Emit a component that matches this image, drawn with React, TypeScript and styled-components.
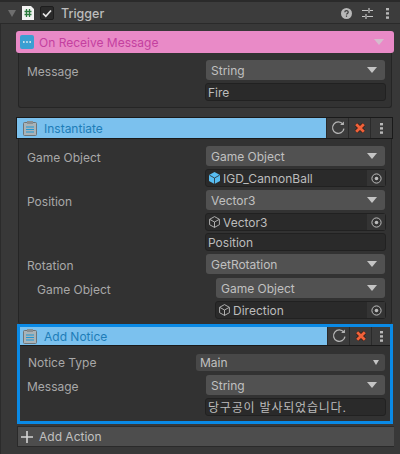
import React from 'react';
import styled, { createGlobalStyle } from 'styled-components';

const Global = createGlobalStyle`
    html, body {
        margin: 0;
        background: #383838;
        overflow: hidden;
    }
    * {
        box-sizing: border-box;
    }
`;

const Inspector = styled.div`
    width: 400px;
    height: 454px;
    padding-left: 1px;
    border-left: 1px solid #2b2b2b;
    font-family: Inter, 'Noto Sans CJK KR', sans-serif;
    font-size: 12px;
    color: #bcbcbc;
`;

const TitleBar = styled.div`
    height: 24px;
    margin: 0 0 0 -2px;
    padding: 1px 11px 0 8px;
    border-top: 2px solid #2a2a2a;
    border-bottom: 1px solid #2a2a2a;
    background: #3c3c3c;
    display: flex;
    align-items: center;
`;

const TitleText = styled.span`
    margin-left: 7px;
    flex: 1;
    font-size: 12.5px;
    font-weight: 500;
    color: #bdbdbd;
`;

const Fold = styled.span`
    width: 0;
    height: 0;
    margin-right: 6px;
    border-left: 4.5px solid transparent;
    border-right: 4.5px solid transparent;
    border-top: 7px solid #6e6e6e;
`;

const CheckBox = styled.span`
    width: 14px;
    height: 14px;
    margin-left: 6px;
    border: 1px solid #1d1d1d;
    border-radius: 2px;
    background: #2a2a2a;
    display: flex;
    align-items: center;
    justify-content: center;
`;

const TitleTools = styled.div`
    display: flex;
    align-items: center;
    gap: 10px;
    svg:last-child {
        margin-left: 3px;
    }
`;

const Stack = styled.div`
    padding: 7px 6px 0 14px;
`;

const EventHead = styled.div`
    height: 22px;
    padding: 0 10px 0 4px;
    border-radius: 3px;
    background: #e98ac7;
    color: #c4409f;
    display: flex;
    align-items: center;
    gap: 5px;
`;

const HeadTitle = styled.span`
    flex: 1;
`;

const Body = styled.div<{ $last?: boolean }>`
    margin: 0 2px;
    padding: 7px 6px ${(p) => (p.$last ? '5px' : '6px')} 8px;
    border: 1px solid #252525;
    border-top: 0;
    border-bottom: ${(p) => (p.$last ? '0' : '1px solid #252525')};
    border-radius: 0 0 3px 3px;
    background: #323232;
    display: flex;
    flex-direction: column;
    gap: 3px;
`;

const ActionHead = styled.div<{ $bare?: boolean }>`
    height: ${(p) => (p.$bare ? '19px' : '22px')};
    margin: ${(p) => (p.$bare ? '0' : '9px 1px 0 0')};
    border: ${(p) => (p.$bare ? '0' : '1px solid #1a1a1a')};
    border-bottom: 1px solid #1a1a1a;
    background: #3c3c3c;
    display: flex;
    align-items: stretch;
`;

const ActionTitle = styled.div<{ $pad: number }>`
    flex: 1;
    padding-left: ${(p) => p.$pad}px;
    background: #7bc1ee;
    color: #1e7db8;
    display: flex;
    align-items: center;
    gap: 7px;
`;

const ActionTool = styled.div<{ $narrow?: boolean }>`
    width: ${(p) => (p.$narrow ? '19px' : '22px')};
    border-left: 1px solid #2a2a2a;
    display: flex;
    align-items: center;
    justify-content: center;
    &:first-of-type {
        border-left: 0;
    }
`;

const Row = styled.div<{ $indent?: number; $value?: number; $nudge?: boolean }>`
    display: grid;
    grid-template-columns: ${(p) => p.$value ?? 179}px 1fr;
    padding-left: ${(p) => p.$indent ?? 0}px;
    margin-top: ${(p) => (p.$nudge ? '1px' : '0')};
    align-items: start;
`;

const Label = styled.div<{ $small?: boolean }>`
    height: 17px;
    padding-top: ${(p) => (p.$small ? '0' : '2px')};
    line-height: ${(p) => (p.$small ? '17px' : '20px')};
    color: #a8a8a8;
`;

const Values = styled.div`
    display: flex;
    flex-direction: column;
    gap: 3px;
`;

const Dropdown = styled.div<{ $small?: boolean }>`
    height: ${(p) => (p.$small ? '17px' : '20px')};
    padding: ${(p) => (p.$small ? '0 6px 0 4px' : '0 8px 0 5px')};
    border-radius: 3px;
    background: ${(p) => (p.$small ? '#484848' : '#515151')};
    color: #c0c0c0;
    display: flex;
    align-items: center;
    justify-content: space-between;
`;

const Arrow = styled.span<{ $small?: boolean; $colour?: string }>`
    width: 0;
    height: 0;
    border-left: ${(p) => (p.$small ? '3.5px' : '5px')} solid transparent;
    border-right: ${(p) => (p.$small ? '3.5px' : '5px')} solid transparent;
    border-top: ${(p) => (p.$small ? '5px' : '6px')} solid ${(p) => p.$colour ?? '#c4c4c4'};
`;

const TextField = styled.div<{ $tight?: boolean; $wide?: boolean }>`
    height: 18px;
    margin: ${(p) => (p.$tight ? '-1px' : '0')} -1px 0;
    padding: 0 2px;
    border: 1px solid #212121;
    border-radius: 3px;
    background: #2a2a2a;
    color: #bcbcbc;
    line-height: 17px;
    letter-spacing: ${(p) => (p.$wide ? '0.8px' : '0')};
    white-space: nowrap;
    overflow: hidden;
`;

const ObjectField = styled.div`
    height: 18px;
    margin: 0 -1px;
    padding-left: 3px;
    border: 1px solid #212121;
    border-radius: 3px;
    background: #2a2a2a;
    color: #bcbcbc;
    display: flex;
    align-items: center;
    gap: 3px;
`;

const ObjectName = styled.span`
    flex: 1;
`;

const Picker = styled.span`
    width: 18px;
    height: 16px;
    background: #343434;
    display: flex;
    align-items: center;
    justify-content: center;
`;

const Notice = styled.div`
    margin: 0 1px 2px 1px;
    border: 3px solid #0a8ae6;
    background: #323232;
`;

const NoticeBody = styled.div`
    padding: 8px 5px 5px 7px;
    display: flex;
    flex-direction: column;
    gap: 4px;
`;

const AddAction = styled.div`
    height: 21px;
    margin: 0 0 0 1px;
    padding-left: 3px;
    border-top: 1px solid #2a2a2a;
    border-bottom: 1px solid #2a2a2a;
    border-left: 1px solid #2a2a2a;
    background: #4d4d4d;
    color: #c0c0c0;
    display: flex;
    align-items: center;
    gap: 6px;
`;

function ScriptIcon() {
    return (
        <svg width="12" height="14" viewBox="0 0 12 14">
            <path d="M0 0h9l3 3v11H0z" fill="#f2f2f2" />
            <path d="M4.5 3v8M7.5 3v8M2.5 5.5h7M2.5 8.5h7" stroke="#2b7a3d" strokeWidth="1.3" fill="none" />
        </svg>
    );
}

function Check() {
    return (
        <svg width="10" height="9" viewBox="0 0 10 9">
            <path d="M1 4.5 3.8 7.2 9 1.5" stroke="#e6e6e6" strokeWidth="1.7" fill="none" />
        </svg>
    );
}

function HelpIcon() {
    return (
        <svg width="11" height="11" viewBox="0 0 11 11">
            <circle cx="5.5" cy="5.5" r="5.5" fill="#b8b8b8" />
            <path d="M3.8 4.2c0-2 3.4-2 3.4 0 0 1.2-1.7 1.2-1.7 2.4" stroke="#3c3c3c" strokeWidth="1.2" fill="none" />
            <rect x="4.9" y="7.5" width="1.2" height="1.3" fill="#3c3c3c" />
        </svg>
    );
}

function SlidersIcon() {
    return (
        <svg width="11" height="11" viewBox="0 0 11 11">
            <path d="M0 2.5h6M8 2.5h3M0 8.5h3M5 8.5h6M7 0v5M4 6v5" stroke="#c4c4c4" strokeWidth="1.2" fill="none" />
        </svg>
    );
}

function Kebab({ colour = '#b8b8b8' }: { colour?: string }) {
    return (
        <svg width="3" height="11" viewBox="0 0 3 11">
            <rect y="0" width="3" height="2.4" fill={colour} />
            <rect y="4.2" width="3" height="2.4" fill={colour} />
            <rect y="8.4" width="3" height="2.4" fill={colour} />
        </svg>
    );
}

function EventIcon() {
    return (
        <svg width="14" height="14" viewBox="0 0 14 14">
            <rect width="14" height="14" rx="2" fill="#3b9fd2" />
            <path d="M3 7h1.6M6.2 7h1.6M9.4 7H11" stroke="#f4f4f4" strokeWidth="1.6" />
        </svg>
    );
}

function ClipboardIcon() {
    return (
        <svg width="14" height="15" viewBox="0 0 14 15">
            <rect x="0.5" y="1.5" width="13" height="13" rx="1" fill="#a9b3b8" stroke="#6f7477" />
            <rect x="4" y="0" width="6" height="3" fill="#8a8f92" />
            <path d="M3 6h8M3 8.5h8M3 11h8" stroke="#1f97d4" strokeWidth="1.2" />
        </svg>
    );
}

function ResetIcon() {
    return (
        <svg width="14" height="14" viewBox="0 0 13 13">
            <path d="M11 3A5.3 5.3 0 1 0 12 7" stroke="#b4b4b4" strokeWidth="1.2" fill="none" />
            <path d="M8.4 3.8h3.6V0.4z" fill="#b4b4b4" />
        </svg>
    );
}

function RemoveIcon() {
    return (
        <svg width="12" height="12" viewBox="0 0 11 11">
            <path d="M2 2 9 9M9 2 2 9" stroke="#3a1a12" strokeWidth="3.8" />
            <path d="M2 2 9 9M9 2 2 9" stroke="#f0623a" strokeWidth="2.6" />
        </svg>
    );
}

function CubeIcon({ solid }: { solid?: boolean }) {
    if (solid) {
        return (
            <svg width="11" height="12" viewBox="0 0 11 12">
                <path d="M5.5 0 11 3v6l-5.5 3L0 9V3z" fill="#58bdf2" />
                <path d="M0.5 3.2 5.5 6l5-2.8M5.5 6v6" stroke="#2a2a2a" strokeWidth="0.8" fill="none" />
            </svg>
        );
    }
    return (
        <svg width="11" height="12" viewBox="0 0 11 12">
            <path d="M5.5 0.6 10.4 3.3v5.4L5.5 11.4.6 8.7V3.3zM.8 3.4 5.5 6l4.7-2.6M5.5 6v5.4" stroke="#bdbdbd" strokeWidth="0.9" fill="none" />
        </svg>
    );
}

function PickerDot() {
    return (
        <svg width="11" height="11" viewBox="0 0 11 11">
            <circle cx="5.5" cy="5.5" r="4.6" stroke="#bdbdbd" strokeWidth="1" fill="none" />
            <circle cx="5.5" cy="5.5" r="1.8" fill="#bdbdbd" />
        </svg>
    );
}

function Select({ children }: { children: React.ReactNode }) {
    return (
        <Dropdown>
            {children}
            <Arrow />
        </Dropdown>
    );
}

function ObjectSlot({ name, solid }: { name: string; solid?: boolean }) {
    return (
        <ObjectField>
            <CubeIcon solid={solid} />
            <ObjectName>{name}</ObjectName>
            <Picker>
                <PickerDot />
            </Picker>
        </ObjectField>
    );
}

function ActionTools({ narrow }: { narrow?: boolean }) {
    return (
        <>
            <ActionTool>
                <ResetIcon />
            </ActionTool>
            <ActionTool>
                <RemoveIcon />
            </ActionTool>
            <ActionTool $narrow={narrow}>
                <Kebab />
            </ActionTool>
        </>
    );
}

export default function App() {
    return (
        <Inspector>
            <Global />
            <TitleBar>
                <Fold />
                <ScriptIcon />
                <CheckBox>
                    <Check />
                </CheckBox>
                <TitleText>Trigger</TitleText>
                <TitleTools>
                    <HelpIcon />
                    <SlidersIcon />
                    <Kebab />
                </TitleTools>
            </TitleBar>
            <Stack>
                <EventHead>
                    <EventIcon />
                    <HeadTitle>On Receive Message</HeadTitle>
                    <Arrow $colour="#d5bccd" />
                </EventHead>
                <Body>
                    <Row>
                        <Label>Message</Label>
                        <Values>
                            <Select>String</Select>
                            <TextField>Fire</TextField>
                        </Values>
                    </Row>
                </Body>

                <ActionHead>
                    <ActionTitle $pad={6}>
                        <ClipboardIcon />
                        Instantiate
                    </ActionTitle>
                    <ActionTools />
                </ActionHead>
                <Body $last>
                    <Row>
                        <Label>Game Object</Label>
                        <Values>
                            <Select>Game Object</Select>
                            <ObjectSlot name="IGD_CannonBall" solid />
                        </Values>
                    </Row>
                    <Row>
                        <Label>Position</Label>
                        <Values>
                            <Select>Vector3</Select>
                            <ObjectSlot name="Vector3" />
                            <TextField $tight>Position</TextField>
                        </Values>
                    </Row>
                    <Row>
                        <Label>Rotation</Label>
                        <Select>GetRotation</Select>
                    </Row>
                    <Row $indent={10} $nudge>
                        <Label>Game Object</Label>
                        <Values>
                            <Select>Game Object</Select>
                            <ObjectSlot name="Direction" />
                        </Values>
                    </Row>
                </Body>

                <Notice>
                    <ActionHead $bare>
                        <ActionTitle $pad={3}>
                            <ClipboardIcon />
                            Add Notice
                        </ActionTitle>
                        <ActionTools narrow />
                    </ActionHead>
                    <NoticeBody>
                        <Row $indent={1} $value={168}>
                            <Label $small>Notice Type</Label>
                            <Dropdown $small>
                                Main
                                <Arrow $small />
                            </Dropdown>
                        </Row>
                        <Row>
                            <Label>Message</Label>
                            <Values>
                                <Select>String</Select>
                                <TextField $wide>당구공이 발사되었습니다.</TextField>
                            </Values>
                        </Row>
                    </NoticeBody>
                </Notice>
                <AddAction>
                    <svg width="12" height="12" viewBox="0 0 12 12">
                        <path d="M6 0v12M0 6h12" stroke="#d4d4d4" strokeWidth="1.6" />
                    </svg>
                    Add Action
                </AddAction>
            </Stack>
        </Inspector>
    );
}
